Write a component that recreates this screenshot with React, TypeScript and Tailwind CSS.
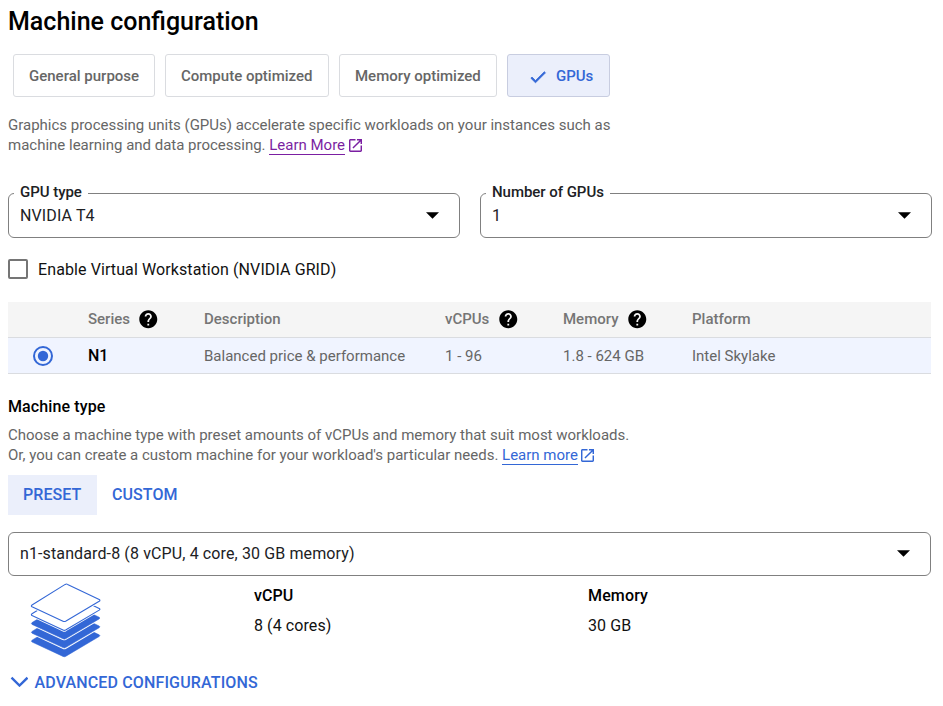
import type { ReactNode } from "react";

function OpenInNew() {
  return (
    <svg viewBox="3 3 18 18" className="ml-[3.5px] inline-block h-[13px] w-[13px] align-[-1.5px]" fill="currentColor">
      <path d="M19 19H5V5h7V3H5c-1.11 0-2 .9-2 2v14c0 1.1.89 2 2 2h14c1.1 0 2-.9 2-2v-7h-2v7zM14 3v2h3.59l-9.83 9.83 1.41 1.41L19 6.41V10h2V3h-7z" />
    </svg>
  );
}

function Help() {
  return (
    <svg viewBox="2 2 20 20" className="mt-px h-[18px] w-[18px] shrink-0 overflow-visible" fill="black">
      <path
        transform="translate(.3 .2)"
        d="M12 2C6.48 2 2 6.48 2 12s4.48 10 10 10 10-4.48 10-10S17.52 2 12 2zm1 17h-2v-2h2v2zm2.07-7.75l-.9.92C13.45 12.9 13 13.5 13 15h-2v-.5c0-1.1.45-2.1 1.17-2.83l1.24-1.26c.37-.36.59-.86.59-1.41 0-1.1-.9-2-2-2s-2 .9-2 2H8c0-2.21 1.79-4 4-4s4 1.79 4 4c0 .88-.36 1.68-.93 2.25z"
      />
    </svg>
  );
}

function Chip({ children, className }: { children: ReactNode; className: string }) {
  return (
    <button
      className={`flex h-[43px] items-start rounded-[3px] border pt-[11px] pb-[10px] pl-[15px] font-medium text-[#666] ${className}`}
    >
      {children}
    </button>
  );
}

function Select({ label, value, className }: { label?: string; value: string; className: string }) {
  return (
    <div className={`relative flex items-center justify-between rounded-[6px] border border-[#808080] pr-5 pl-[11px] text-[#202124] ${className}`}>
      {label && (
        <span className="absolute top-[-12px] left-[5px] bg-white pr-[6px] pl-[6px] font-medium tracking-[-0.04px]">{label}</span>
      )}
      <span className="text-base leading-[23px] tracking-[0.12px]">{value}</span>
      <svg viewBox="0 0 14 7" className="h-[7px] w-[14px]" fill="black">
        <path d="M1 .2h13L7.5 6.8z" />
      </svg>
    </div>
  );
}

function Layers() {
  const sheet = "M37.6 1.4 69.2 16.6Q70.6 17.4 69.2 18.3L35.6 38.2Q34.3 38.9 33 38.2L2 23.8Q.7 22.9 2 22L35.2 1.4Q36.5.7 37.6 1.4Z";
  return (
    <svg viewBox="0 0 71 76" className="h-[76px] w-[71px]" strokeLinejoin="round">
      {[35.2, 26.4, 17.6].map((y) => (
        <g key={y} transform={`translate(0 ${y})`}>
          <path d={sheet} fill="white" stroke="white" strokeWidth="2.4" />
          <path d={sheet} fill="#3367d6" stroke="#3367d6" strokeWidth=".5" />
        </g>
      ))}
      {[8.8, 0].map((y) => (
        <g key={y} transform={`translate(0 ${y})`}>
          <path d={sheet} fill="white" stroke="white" strokeWidth="2.6" />
          <path d={sheet} fill="white" stroke="#3367d6" strokeWidth="1.1" />
        </g>
      ))}
    </svg>
  );
}

const columns = "grid grid-cols-[80px_116px_241px_118px_129px_1fr] border-b border-[#dadce0] h-9";

export default function App() {
  return (
    <main className="h-[706px] w-[943px] overflow-hidden bg-white pt-[7px] pl-2 font-[Roboto,sans-serif] text-[15px] leading-5 text-[#666]">
      <h1 className="text-[25px] leading-[29px] font-medium text-black">Machine configuration</h1>

      <div className="mt-[18px] ml-[5px] flex gap-[10px]">
        <Chip className="w-[142px] border-[#dadce0]">General purpose</Chip>
        <Chip className="w-[164px] border-[#dadce0]">Compute optimized</Chip>
        <Chip className="w-[158px] border-[#dadce0]">Memory optimized</Chip>
        <Chip className="w-[103px] border-[#c8cde0] bg-[#ebeffb]">
          <svg viewBox="0 0 24 24" className="mt-[1px] ml-[5px] h-5 w-5" fill="#3367d6">
            <path d="M9 16.17 4.83 12l-1.42 1.41L9 19 21 7l-1.41-1.41z" stroke="#3367d6" strokeWidth=".9" />
          </svg>
          <span className="ml-2 text-[#3367d6]">GPUs</span>
        </Chip>
      </div>

      <p className="mt-[18px] tracking-[-0.006px]">
        Graphics processing units (GPUs) accelerate specific workloads on your instances such as
        <br />
        machine learning and data processing.{" "}
        <span className="text-[#7b1fa2]">
          <a className="border-b border-current">Learn More</a>
          <OpenInNew />
        </span>
      </p>

      <div className="mt-[38px] flex gap-5">
        <Select label="GPU type" value="NVIDIA T4" className="h-[45px] w-[452px]" />
        <Select label="Number of GPUs" value="1" className="h-[45px] w-[452px]" />
      </div>

      <label className="mt-5 flex h-[23px] items-start">
        <span className="mt-px h-5 w-5 rounded-[2px] border-2 border-[#757575]" />
        <span className="ml-[10px] text-base leading-[23px] tracking-[0.1px] text-[#111]">Enable Virtual Workstation (NVIDIA GRID)</span>
      </label>

      <section className="mt-[21px] w-[923px]">
        <div className={`${columns} bg-[#f5f5f5] pt-[7px] font-medium text-[#757575]`}>
          <span />
          <span className="flex gap-[9px]">Series<Help /></span>
          <span>Description</span>
          <span className="flex gap-[10px]">vCPUs<Help /></span>
          <span className="flex gap-[9.5px]">Memory<Help /></span>
          <span>Platform</span>
        </div>
        <div className={`${columns} bg-[#f0f4ff] pt-2`}>
          <svg viewBox="0 0 20 20" className="ml-[25px] h-5 w-5">
            <circle cx="10" cy="10" r="9" fill="none" stroke="#3367d6" strokeWidth="2" />
            <circle cx="10" cy="10" r="5.2" fill="#3367d6" />
          </svg>
          <span className="text-base leading-5 font-medium text-black">N1</span>
          <span>Balanced price &amp; performance</span>
          <span>1 - 96</span>
          <span>1.8 - 624 GB</span>
          <span>Intel Skylake</span>
        </div>
      </section>

      <h2 className="mt-[21px] text-base leading-[23px] font-medium tracking-[0.12px] text-black">Machine type</h2>
      <p className="mt-[7px] tracking-[-0.007px]">
        Choose a machine type with preset amounts of vCPUs and memory that suit most workloads.
        <br />
        Or, you can create a custom machine for your workload's particular needs.{" "}
        <span className="text-[#3367d6]">
          <a className="border-b border-current">Learn more</a>
          <OpenInNew />
        </span>
      </p>

      <div className="mt-[10px] flex text-base leading-[23px] font-medium text-[#3367d6]">
        <button className="flex h-10 w-[89px] bg-[#ebeffb] pt-2 pl-[15px] tracking-[0.05px]">PRESET</button>
        <button className="flex h-10 pt-2 pl-[15px] tracking-[0.07px]">CUSTOM</button>
      </div>

      <div className="mt-[17px]">
        <Select value="n1-standard-8 (8 vCPU, 4 core, 30 GB memory)" className="h-11 w-[923px] pb-px" />
      </div>

      <div className="mt-[6px] flex h-[89px] text-base leading-[23px] tracking-[0.08px] text-[#111]">
        <div className="w-[246px] pt-px pl-[22px]">
          <Layers />
        </div>
        <div className="w-[334px] pt-[2px]">
          <div className="font-medium text-black">vCPU</div>
          <div className="mt-[7px]">8 (4 cores)</div>
        </div>
        <div className="pt-[2px]">
          <div className="font-medium tracking-[0.15px] text-black">Memory</div>
          <div className="mt-[7px]">30 GB</div>
        </div>
      </div>

      <button className="flex text-base leading-[23px] font-medium tracking-[0.14px] text-[#3367d6]">
        <svg viewBox="0 0 18 11" className="mt-[5px] ml-[2px] h-[11px] w-[18px]" fill="none" stroke="currentColor" strokeWidth="2.4">
          <path d="M1.5 1.7 9.5 9.5l8-7.8" />
        </svg>
        <span className="ml-[6.5px]">ADVANCED CONFIGURATIONS</span>
      </button>
    </main>
  );
}
